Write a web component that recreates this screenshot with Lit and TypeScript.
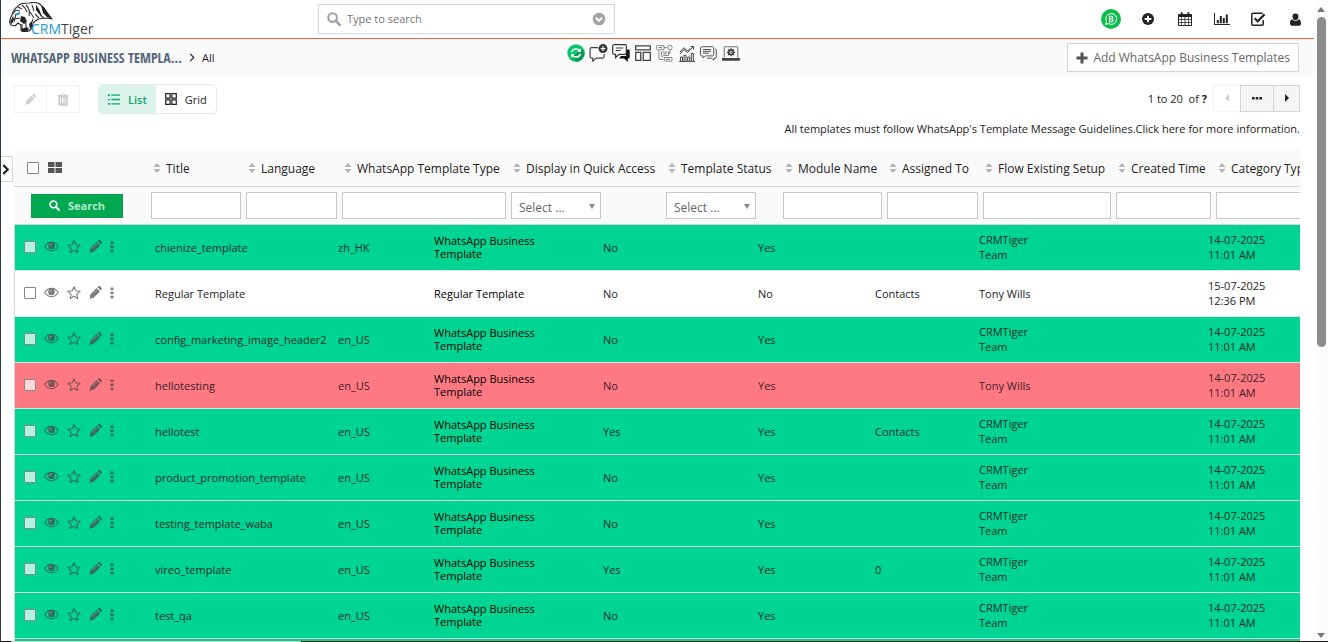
import { LitElement, html, svg, css } from "lit";
import { customElement } from "lit/decorators.js";
import { classMap } from "lit/directives/class-map.js";

interface Row {
  title: string;
  lang: string;
  type: string;
  quick: string;
  status: string;
  module: string;
  assigned: string;
  date: string;
  time: string;
  tone: "green" | "red" | "plain";
}

const WBT = "WhatsApp Business Template";
const row = (
  title: string, lang: string, quick = "No", module = "",
  assigned = "CRMTiger Team", tone: Row["tone"] = "green",
): Row => ({
  title, lang, type: WBT, quick, status: "Yes", module, assigned,
  date: "14-07-2025", time: "11:01 AM", tone,
});

const ROWS: Row[] = [
  row("chienize_template", "zh_HK"),
  { title: "Regular Template", lang: "", type: "Regular Template", quick: "No", status: "No",
    module: "Contacts", assigned: "Tony Wills", date: "15-07-2025", time: "12:36 PM", tone: "plain" },
  row("config_marketing_image_header2", "en_US"),
  row("hellotesting", "en_US", "No", "", "Tony Wills", "red"),
  row("hellotest", "en_US", "Yes", "Contacts"),
  row("product_promotion_template", "en_US"),
  row("testing_template_waba", "en_US"),
  row("vireo_template", "en_US", "Yes", "0"),
  row("test_qa", "en_US"),
];

const COLUMNS: { label: string; cls: string; filter: "text" | "select" }[] = [
  { label: "Title", cls: "w-title", filter: "text" },
  { label: "Language", cls: "w-lang", filter: "text" },
  { label: "WhatsApp Template Type", cls: "w-type", filter: "text" },
  { label: "Display in Quick Access", cls: "w-quick", filter: "select" },
  { label: "Template Status", cls: "w-status", filter: "select" },
  { label: "Module Name", cls: "w-module", filter: "text" },
  { label: "Assigned To", cls: "w-assigned", filter: "text" },
  { label: "Flow Existing Setup", cls: "w-flow", filter: "text" },
  { label: "Created Time", cls: "w-created", filter: "text" },
  { label: "Category Type", cls: "w-category", filter: "text" },
];

const icon = (w: number, h: number, box: string, body: unknown) =>
  html`<svg class="icon" width=${w} height=${h} viewBox=${box} aria-hidden="true">${body}</svg>`;

const magnifier = (s: number) => icon(s, s, "0 0 14 14", svg`
  <circle cx="5.6" cy="5.6" r="4.3" fill="none" stroke="currentColor" stroke-width="2.1"/>
  <path d="M9 9l3.8 3.8" stroke="currentColor" stroke-width="2.6" stroke-linecap="round"/>`);

const pencil = (s: number) => icon(s, s, "0 0 14 14", svg`
  <path fill="currentColor" d="M8.200 2.200l3.600 3.600-6.800 6.800-4.300 1 .8-4.700zM9.200 1.300l.9-.9c.5-.5 1.300-.5 1.800 0l1.700 1.700c.5.5.5 1.300 0 1.800l-.9.9z"/>
  <path fill="none" stroke="#fff" stroke-opacity=".5" stroke-width=".7" d="M3.400 9.100l5.200-5.200"/>`);

const trash = icon(12, 13, "0 0 12 13", svg`
  <path fill="currentColor" fill-rule="evenodd" d="M4 .5h4l.7 1.500H11.500v1H10.700v8.500c0 .8-.5 1.300-1.200 1.300h-7c-.7 0-1.200-.5-1.200-1.300V3H.5V2h2.800zM4.500 1.300L4.200 2h3.600l-.3-.7zM3.300 4.500v6h.9v-6zM5.500 4.500v6h1v-6zM7.700 4.500v6h.9v-6z"/>`);

const eye = icon(15, 11, "0 0 15 11", svg`
  <path fill="none" stroke="currentColor" stroke-width="1.100" d="M.8 5.500C2.500 2.800 4.800 1.300 7.500 1.300s5 1.500 6.700 4.200c-1.700 2.700-4 4.200-6.700 4.200S2.500 8.200.8 5.500z"/>
  <circle cx="7.500" cy="4.900" r="3.300" fill="currentColor"/>
  <path d="M5.900 4.700c0-1 .7-1.600 1.600-1.600" stroke="#fff" stroke-opacity=".6" stroke-width=".7" fill="none"/>`);

const star = icon(14, 13, "0 0 14 13", svg`
  <path fill="none" stroke="currentColor" stroke-width="1.100" stroke-linejoin="round" d="M7 .8l1.800 3.900 4.400.5-3.300 2.900.9 4.300L7 10.300l-3.800 2.100.9-4.300L.8 5.200l4.400-.5z"/>`);

const dots = icon(4, 12, "0 0 4 12", svg`
  <path fill="currentColor" d="M.5.5h3v2.600h-3zM.5 4.600h3v2.600h-3zM.5 8.700h3v2.600h-3z"/>`);

const sorter = icon(8, 10, "0 0 8 10", svg`<path fill="#b5b5b5" d="M4 0l3.600 4H.4zM4 10L.4 6h7.200z"/>`);

const tiles = icon(14, 11, "0 0 14 11", svg`
  <path fill="#555" d="M0 0h6.500v5H0zM7.500 0H14v5H7.500zM0 6h6.500v5H0zM7.500 6H14v5H7.500z"/>`);

const listIcon = icon(12, 11, "0 0 12 11", svg`
  <path fill="currentColor" d="M0 .3h1.800v1.600H0zM3.300.4H12v1.400H3.300zM0 4.700h1.800v1.600H0zM3.300 4.800H12v1.400H3.300zM0 9.100h1.800v1.600H0zM3.300 9.200H12v1.400H3.300z"/>`);

const gridIcon = icon(12, 12, "0 0 12 12", svg`
  <path fill="none" stroke="#222" stroke-width="1.200" d="M.7.7h4.400v4.400H.7zM6.900.7h4.400v4.400H6.900zM.7 6.900h4.400v4.400H.7zM6.900 6.900h4.400v4.400H6.900z"/>`);

const waBadge = icon(20, 20, "0 0 20 20", svg`
  <circle cx="10" cy="10" r="10" fill="#0bbf4d"/>
  <path fill="none" stroke="#fff" stroke-width="1" d="M4.700 15.400l.8-2.900a5.400 5.400 0 1 1 2 2.100z"/>
  <path fill="none" stroke="#fff" stroke-width="1.100" d="M8.500 7.300h1.900a1.200 1.200 0 0 1 0 2.600H8.500zM8.500 9.900h2.200a1.300 1.300 0 0 1 0 2.700H8.500z"/>`);

const plusCircle = icon(12, 12, "0 0 12 12", svg`
  <circle cx="6" cy="6" r="6" fill="#222"/>
  <path d="M6 2.700v6.600M2.700 6h6.600" stroke="#fff" stroke-width="1.800"/>`);

const calendar = icon(14, 14, "0 0 14 14", svg`
  <path fill="#222" fill-rule="evenodd" d="M1 2h12c.5 0 1 .4 1 1v10c0 .6-.5 1-1 1H1c-.5 0-1-.4-1-1V3c0-.6.5-1 1-1zM1 5v2.200h2.300V5zM4 5v2.200h2.600V5zM7.400 5v2.200H10V5zM10.700 5v2.200H13V5zM1 7.900v2.300h2.300V7.900zM4 7.900v2.300h2.600V7.900zM7.400 7.900v2.300H10V7.900zM10.700 7.900v2.300H13V7.900zM1 10.900v2.200h2.300v-2.200zM4 10.900v2.200h2.600v-2.200zM7.400 10.900v2.200H10v-2.200zM10.700 10.900v2.200H13v-2.200z"/>
  <path d="M3.700.3v3M10.300.3v3" stroke="#222" stroke-width="1.800"/>`);

const bars = icon(16, 12, "0 0 16 12", svg`
  <path fill="#222" d="M0 0h1v11h15v1H0zM2.800 7h2v3.200h-2zM5.800 3h2v7.200h-2zM8.800 5h2v5.200h-2zM11.800 1.500h2v8.700h-2z"/>`);

const task = icon(15, 14, "0 0 15 14", svg`
  <path fill="none" stroke="#222" stroke-width="1.500" d="M12.200 8v4.200a1 1 0 0 1-1 1H1.800a1 1 0 0 1-1-1V2.300a1 1 0 0 1 1-1h9.800"/>
  <path fill="none" stroke="#222" stroke-width="2.200" d="M3.700 6.200L6.700 9.200l6.800-6.800"/>`);

const user = icon(11, 13, "0 0 11 13", svg`
  <path fill="#222" d="M5.500.5a3 3 0 0 1 3 3.200c0 1.900-1.300 3.500-3 3.500s-3-1.600-3-3.500a3 3 0 0 1 3-3.200zM2.300 6.300c.8 1 1.900 1.700 3.200 1.700s2.400-.7 3.200-1.700c1.700.4 2.300 2.300 2.300 4.300 0 1.300-.8 2.200-1.900 2.200H1.900C.8 12.800 0 11.900 0 10.600c0-2 .6-3.900 2.300-4.300z"/>`);

const tiger = icon(44, 30, "0 0 44 30", svg`
  <path fill="#fff" stroke="#333" stroke-width="1.200" stroke-linejoin="round" d="M1 21c-1-3 0-5 2-8 1-4 2-6 5-8 3-4 7-4 12-4 5-1 9-1 12 2l11 14-5-1-9 1-5 4-1 5-3 3-6 1-2-2v-5l-3-2-3 3-4-1z"/>
  <path fill="#222" d="M1 20l3-6 1 3-2 5zM12 14l4 1 2 5-3 2-4-3zM12 27l6-2 2 2-2 3h-5zM32 3l3 2 8 12-5-2-4-4zM27 3l3 4 3 7-3-2-3-4zM20 22l3-3v6l-2 2z"/>
  <path fill="none" stroke="#333" stroke-width="1.100" d="M4 12l3-4 4 1M9 5l4 2M13 3l3 3 2 4M17 3c3 3 4 7 3 11M23 3l2 6M21 10l4 6M26 12l4 4M31 13l4 3M7 12l-2 8M6 17l5-1M13 22v5M17 21v4M24 17l-1 3"/>
  <path d="M7 12.500l4-1.500" stroke="#1c9ad6" stroke-width="2"/>`);

const syncIcon = icon(18, 18, "0 0 18 18", svg`
  <circle cx="9" cy="9" r="8.700" fill="#06c56c"/>
  <path d="M9 17.700A8.700 8.700 0 0 0 17.700 9L14 5.500 5 13z" fill="#059a57"/>
  <path fill="none" stroke="#fff" stroke-width="1.500" d="M4.600 8.200c.5-2 2.200-3.300 4.400-3.300 1.600 0 2.900.7 3.800 1.900M13.400 9.800c-.5 2-2.200 3.300-4.400 3.300-1.600 0-2.900-.7-3.800-1.900"/>
  <path fill="#fff" d="M13.900 4.300v3.600h-3.600zM4.100 13.700v-3.600h3.600z"/>`);

const chatAdd = icon(19, 18, "0 0 19 18", svg`
  <path fill="none" stroke="#444" stroke-width="1.200" d="M9 3.600H2.600c-1 0-1.500.6-1.500 1.500v7.500c0 1 .5 1.500 1.500 1.500h1.200v3l3.600-3h6.200c1 0 1.500-.5 1.500-1.500V10"/>
  <circle cx="14" cy="4.600" r="4.500" fill="#333"/>
  <path d="M14 2.300v4.600M11.700 4.600h4.600" stroke="#fff" stroke-width="1.200"/>`);

const chats = icon(18, 18, "0 0 18 18", svg`
  <path fill="#111" d="M14 5.500h2.400c.8 0 1.300.5 1.300 1.300v6.400c0 .8-.5 1.300-1.300 1.300h-.6V18l-3.700-3.500H7l2-2.500h5z"/>
  <path fill="#fff" stroke="#333" stroke-width="1.200" d="M2.200.7h10.600c.9 0 1.500.6 1.500 1.500v6.600c0 .9-.6 1.500-1.500 1.500H7L3.600 13.500v-3.200H2.200c-.9 0-1.500-.6-1.500-1.500V2.200C.7 1.300 1.300.7 2.200.7z"/>
  <path d="M3.700 4h7.600M3.700 6.500h5" stroke="#333"/>`);

const layout = icon(16, 16, "0 0 16 16", svg`
  <path fill="none" stroke="#444" stroke-width="1.300" d="M.7.9h14.600v4H.7zM.7 7.400h5v7.900h-5zM8.200 7.400h7.100v7.900H8.200z"/>`);

const flow = icon(17, 17, "0 0 17 17", svg`
  <path fill="none" stroke="#888" d="M1.500.6H8v4H3.500L2 6V4.600H1.500C.8 4.600.5 4.200.5 3.600v-2c0-.6.3-1 1-1zM5.500 7h7v3.500h-5L6 12v-1.500h-.500zM8 12.500h8v3.600H9zM8 2.600h3M3 6v8.500h4.500M14 5v3.500h-1.500"/>
  <circle cx="14" cy="2.600" r="2.200" fill="none" stroke="#888"/>
  <path d="M2.500 2.600H6M7.500 8.800h3M10 14.300h4" stroke="#777"/>`);

const chart = icon(16, 17, "0 0 16 17", svg`
  <path fill="none" stroke="#444" d="M1.500 16v-4h2v4M5 16v-5.500h2V16M8.700 16v-4h2v4M12.300 16V8.500h2V16M0 16.400h16M1 9l4-4.500 3.500 3L14 1.800M11.500 1.500h3v3M1 7l4-4.300L8.500 6l2.300-2.500"/>`);

const message = icon(17, 15, "0 0 17 15", svg`
  <path fill="none" stroke="#555" d="M1.700.7h10.800c.7 0 1.200.4 1.200 1.100v7c0 .7-.5 1.100-1.200 1.100H5.500L3 12V9.900H1.700C1 9.900.5 9.500.5 8.800v-7C.5 1.100 1 .7 1.700.7zM15 3c.8 0 1.300.4 1.300 1.100v7c0 .7-.5 1.100-1.200 1.100H14v2l-2.500-2H7M3 3.500h8M3 5.300h8M3 7.100h6"/>`);

const laptop = icon(18, 15, "0 0 18 15", svg`
  <path fill="none" stroke="#777" stroke-width="1.100" d="M2.200 11.500V1.800c0-.7.300-1 1-1h11.600c.7 0 1 .3 1 1v9.700"/>
  <path fill="#444" d="M0 12h18v1.400c0 .8-.5 1.300-1.200 1.300H1.200c-.7 0-1.200-.5-1.200-1.300z"/>
  <circle cx="9" cy="6.300" r="2.300" fill="#fff" stroke="#333" stroke-width="1.500"/>
  <path d="M9 2.300v2M9 8.300v2M5 6.300h2M11 6.300h2M6.200 3.500l1.400 1.400M10.400 7.700l1.400 1.400M11.800 3.500l-1.400 1.400M7.600 7.700L6.200 9.100" stroke="#333" stroke-width="1.300"/>
  <circle cx="9" cy="6.300" r=".8" fill="#333"/>`);

const plus = icon(12, 12, "0 0 12 12", svg`<path d="M6 .5v11M.5 6h11" stroke="#555" stroke-width="3"/>`);

const down = icon(14, 14, "0 0 14 14", svg`
  <circle cx="7" cy="7" r="6.300" fill="#a3a3a3"/>
  <path d="M3.800 5.600L7 8.800l3.200-3.200" fill="none" stroke="#fff" stroke-width="2"/>`);

const chevron = (w: number, h: number, sw: number) => icon(w, h, "0 0 6 10", svg`
  <path d="M1 1l4 4-4 4" fill="none" stroke="#222" stroke-width=${sw}/>`);

const SHORTCUTS: [string, unknown][] = [
  ["Sync", syncIcon], ["New chat", chatAdd], ["Chats", chats], ["Layout", layout],
  ["Flow", flow], ["Analytics", chart], ["Messages", message], ["Settings", laptop],
];
const NAV: [string, unknown][] = [
  ["WhatsApp", waBadge], ["Quick create", plusCircle], ["Calendar", calendar],
  ["Reports", bars], ["Tasks", task], ["Account", user],
];

@customElement("app-root")
export class AppRoot extends LitElement {
  static styles = css`
    :host {
      display: grid;
      grid-template-columns: minmax(0, 1fr) 14px;
      grid-template-rows: minmax(0, 1fr) 1px;
      height: 100vh;
      overflow: hidden;
      background: #fff;
      color: #222;
      font: 11px/15px "Open Sans", "Noto Sans", sans-serif;
    }
    * { box-sizing: border-box; }
    button, input, select { font: inherit; color: inherit; margin: 0; }
    button { background: none; border: 0; padding: 0; display: inline-flex; align-items: center; justify-content: center; }
    a { color: inherit; text-decoration: none; }
    .icon { display: block; flex: none; }
    .page { border-left: 1px solid #2c3b49; overflow: hidden; }

    .top { display: grid; grid-template-columns: 317px 297px 1fr; align-items: center; height: 38px; }
    .logo { display: flex; align-items: flex-end; padding-left: 8px; height: 36px; }
    .logo .icon { margin-bottom: 5px; }
    .brand { margin-left: -22px; font-size: 14px; line-height: 16px; color: #444; }
    .brand b { font-weight: 400; color: #1c9ad6; }
    .search { display: flex; align-items: center; gap: 6px; height: 30px; padding: 0 8px; border: 1px solid #d5d5d5; color: #a3a3a3; }
    .search input { flex: 1; min-width: 0; border: 0; outline: 0; padding: 0 0 2px; color: #555; background: none; }
    .search input::placeholder { color: #757575; opacity: 1; }
    .nav { display: flex; justify-content: flex-end; align-items: center; }
    .nav button { width: 37px; height: 30px; }

    .crumbs { display: grid; grid-template-columns: 1fr auto 1fr; align-items: center; height: 38px; margin-left: -1px; padding: 0 15px 0 10px;
      border-top: 1px solid #fb5b3b; border-left: 1px solid #fb5b3b; background: #fafafa; }
    .trail { display: flex; align-items: center; gap: 7px; }
    .trail h1 { margin: 0; font: 300 14px/20px "Open Sans Condensed", "Liberation Sans Narrow", "Open Sans", sans-serif; color: #56687a; white-space: nowrap; }
    .shortcuts { display: flex; align-items: center; align-self: start; gap: 5px; height: 28px; padding-right: 4px; }
    .shortcuts button { width: 17px; height: 18px; }
    .shortcuts button:first-child { width: 18px; }
    .add { justify-self: end; gap: 5px; height: 29px; padding: 0 8px; border: 1px solid #d5d5d5; background: #fff; color: #666; font-size: 12px; white-space: nowrap; }

    .tools { display: flex; align-items: center; justify-content: space-between; height: 46px; padding: 0 14px 0 13px; }
    .group { display: flex; align-items: center; }
    .faint { color: #ccc; border: 1px solid #f1f1f1; width: 33px; height: 28px; }
    .faint + .faint { border-left: 0; }
    .views { display: flex; margin-left: 18px; border: 1px solid #e8e8e8; border-radius: 5px; overflow: hidden; }
    .views button { gap: 8px; height: 28px; padding: 0 9px; }
    .views .on { background: #dcf3ea; color: #0ba56f; font-weight: 600; }
    .count { white-space: pre; margin-right: 6px; }
    .pager { width: 27px; height: 27px; border: 1px solid #d5d5d5; background: #f5f5f5; }
    .pager.off { border-color: #f3f3f3; border-right: 0; background: #fff; }
    .pager.more { width: 33px; border-right: 0; }
    .tools .group:last-child { margin-top: -2px; }
    .note { padding: 0 14px 0 0; text-align: right; line-height: 13px; height: 27px; margin: 0; }

    .main { display: grid; grid-template-columns: 13px minmax(0, 1fr); padding-right: 14px; }
    .expand { width: 12px; height: 26px; margin-top: 7px; padding-right: 2px; border: 1px solid #d5d5d5; border-left: 0; background: #fff; }
    .scroller { overflow: hidden; }
    table { table-layout: fixed; border-collapse: separate; border-spacing: 0; width: 1389px; }
    th, td { padding: 0; text-align: left; font-weight: 400; }
    .w-act { width: 132px; }
    .w-actbody { width: 135px; }
    .w-title { width: 95px; }
    .w-titlebody { width: 183px; }
    .w-lang { width: 96px; }
    .w-type { width: 169px; }
    .w-quick { width: 155px; }
    .w-status { width: 117px; }
    .w-module { width: 104px; }
    .w-assigned { width: 96px; }
    .w-flow { width: 133px; }
    .w-created { width: 100px; }
    .w-category { width: 192px; }
    .head { background: #fafafa; }
    .head th { height: 38px; border-bottom: 1px solid #d5d5d5; font-size: 12px; font-weight: 500; white-space: nowrap; }
    .head td { height: 38px; padding: 0 0 0 5px; border-bottom: 1px solid #d5d5d5; }
    .sort { gap: 5px; padding: 2px 0 0 7px; }
    .pick { display: flex; align-items: center; gap: 9px; padding-left: 13px; }
    .box { appearance: none; display: block; width: 12px; height: 12px; border: 1px solid #858585; background: #fff; border-radius: 1px; }
    .go { width: 92px; height: 24px; margin-left: 12px; gap: 8px; background: #00a84f; border: 1px solid #0a9a4a; color: #fff; font-weight: 700; }
    .go span { color: #b4ecc9; }
    .field { display: block; width: 100%; height: 27px; border: 1px solid #c8c8c8; background: #fff; padding: 0 6px; }
    .drop { position: relative; display: block; width: 90px; }
    .drop select { appearance: none; padding: 4px 7px 0; color: #666; font-size: 12px; }
    .drop::after { content: ""; position: absolute; right: 6px; top: 12px; border: 3px solid transparent; border-top: 5px solid #888; border-bottom: 0; pointer-events: none; }

    .body { border-left: 1px solid #d5d5d5; }
    .body td { height: 46px; padding: 0 5px; border-bottom: 1px solid #d9e5df; vertical-align: middle; }
    .body td.pair { padding-bottom: 1px; }
    .green { background: #00d492; }
    .red { background: #ff7982; }
    .plain { background: #fff; }
    .green td { color: #0a2f28; }
    .red td { color: #40222a; }
    .body .kind { color: #000; line-height: 13px; padding-right: 50px; }
    .body .who { padding-right: 30px; }
    .acts { display: flex; align-items: center; gap: 8px; padding: 0 0 2px 4px; color: rgba(68, 68, 68, 0.7); }
    .green .box, .red .box { background: rgba(255, 255, 255, 0.7); }
    .when { white-space: nowrap; }
    .next { height: 4px; border-left: 1px solid #d5d5d5; }

    .bar { display: flex; flex-direction: column; align-items: center; background: #fcfcfc; padding: 7px 0 3px; gap: 5px; }
    .track { flex: 1; width: 9px; }
    .thumb { height: 54%; border-radius: 5px; background: #8b8b8b; }
    .foot { grid-column: 1 / -1; background: #1a1a1a; padding-left: 11px; }
    .foot div { width: 22%; height: 1px; background: #c9c9c9; }
  `;

  private headTable() {
    return html`
      <table class="head">
        <colgroup><col class="w-act">${COLUMNS.map((c) => html`<col class=${c.cls}>`)}</colgroup>
        <thead>
          <tr>
            <th><div class="pick"><input class="box" type="checkbox" aria-label="Select all">${tiles}</div></th>
            ${COLUMNS.map((c) => html`<th scope="col"><button class="sort">${sorter}${c.label}</button></th>`)}
          </tr>
        </thead>
        <tbody>
          <tr>
            <td><button class="go">${magnifier(11)}<span>Search</span></button></td>
            ${COLUMNS.map((c) => html`<td>${c.filter === "text"
              ? html`<input class="field" type="text" aria-label=${c.label}>`
              : html`<label class="drop"><select class="field" aria-label=${c.label}><option>Select ...</option><option>Yes</option><option>No</option></select></label>`}</td>`)}
          </tr>
        </tbody>
      </table>`;
  }

  private bodyTable() {
    return html`
      <table class="body">
        <colgroup>
          <col class="w-actbody"><col class="w-titlebody">
          ${COLUMNS.slice(1).map((c) => html`<col class=${c.cls}>`)}
        </colgroup>
        <tbody>
          ${ROWS.map((r) => html`
            <tr class=${classMap({ [r.tone]: true })}>
              <td><div class="acts">
                <input class="box" type="checkbox" aria-label="Select row">
                <button aria-label="View">${eye}</button>
                <button aria-label="Follow">${star}</button>
                <button aria-label="Edit">${pencil(13)}</button>
                <button aria-label="More">${dots}</button>
              </div></td>
              <td>${r.title}</td>
              <td>${r.lang}</td>
              <td class="kind pair">${r.type}</td>
              <td>${r.quick}</td>
              <td>${r.status}</td>
              <td>${r.module}</td>
              <td class="who pair">${r.assigned}</td>
              <td></td>
              <td class="when pair">${r.date}<br>${r.time}</td>
              <td></td>
            </tr>`)}
        </tbody>
      </table>
      <div class="next green"></div>`;
  }

  render() {
    return html`
      <div class="page">
        <header class="top">
          <a class="logo" href="#" aria-label="CRMTiger">${tiger}<span class="brand"><b>CRM</b>Tiger</span></a>
          <div class="search">${magnifier(14)}<input type="text" placeholder="Type to search" aria-label="Search">${down}</div>
          <nav class="nav">${NAV.map(([n, i]) => html`<button aria-label=${n}>${i}</button>`)}</nav>
        </header>
        <section class="crumbs">
          <div class="trail"><h1>WHATSAPP BUSINESS TEMPLA...</h1>${chevron(6, 9, 1.3)}<a href="#">All</a></div>
          <div class="shortcuts">${SHORTCUTS.map(([n, i]) => html`<button aria-label=${n}>${i}</button>`)}</div>
          <button class="add">${plus}Add WhatsApp Business Templates</button>
        </section>
        <section class="tools">
          <div class="group">
            <button class="faint" aria-label="Edit">${pencil(11)}</button>
            <button class="faint" aria-label="Delete">${trash}</button>
            <div class="views"><button class="on">${listIcon}List</button><button>${gridIcon}Grid</button></div>
          </div>
          <div class="group">
            <span class="count">1 to 20  of <b>?</b></span>
            <button class="pager off" aria-label="Previous">${icon(4, 8, "0 0 4 8", svg`<path fill="#ccc" d="M4 0v8L0 4z"/>`)}</button>
            <button class="pager more" aria-label="Pages">${icon(10, 3, "0 0 10 3", svg`<path fill="#222" d="M0 0h2.600v2.600H0zM3.700 0h2.600v2.600H3.700zM7.400 0H10v2.600H7.400z"/>`)}</button>
            <button class="pager" aria-label="Next">${icon(4, 8, "0 0 4 8", svg`<path fill="#222" d="M0 0v8l4-4z"/>`)}</button>
          </div>
        </section>
        <p class="note">All templates must follow WhatsApp's Template Message Guidelines.<a href="#">Click here for more information.</a></p>
        <main class="main">
          <button class="expand" aria-label="Expand sidebar">${chevron(7, 11, 2)}</button>
          <div class="scroller">${this.headTable()}${this.bodyTable()}</div>
        </main>
      </div>
      <div class="bar">
        ${icon(8, 5, "0 0 8 5", svg`<path fill="#777" d="M4 0l4 5H0z"/>`)}
        <div class="track"><div class="thumb"></div></div>
        ${icon(8, 5, "0 0 8 5", svg`<path fill="#777" d="M4 5l4-5H0z"/>`)}
      </div>
      <div class="foot"><div></div></div>`;
  }
}
